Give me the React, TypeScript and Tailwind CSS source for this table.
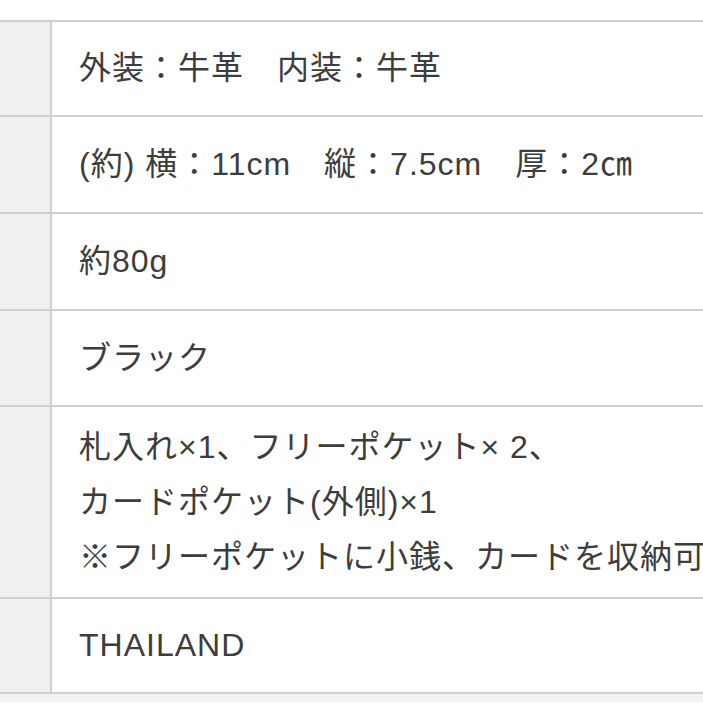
import React from "react"

const rows: { h: string; lines: string[] }[] = [
  { h: "h-[95px]", lines: ["外装：牛革　内装：牛革"] },
  { h: "h-[97px]", lines: ["(約) 横：11cm　縦：7.5cm　厚：2㎝"] },
  { h: "h-[97px]", lines: ["約80g"] },
  { h: "h-[96px]", lines: ["ブラック"] },
  {
    h: "h-[192px]",
    lines: ["札入れ×1、フリーポケット× 2、", "カードポケット(外側)×1", "※フリーポケットに小銭、カードを収納可能"],
  },
  { h: "h-[95px]", lines: ["THAILAND"] },
]

export default function App() {
  return (
    <div
      className="w-[703px] h-[703px] overflow-hidden bg-white text-[#3d3d3d]"
      style={{ fontFamily: '"Liberation Sans", "Noto Sans CJK JP", sans-serif' }}
    >
      <div className="h-[20px]" />
      {/* spec table */}
      <div className="w-[780px] border-t-2 border-[#cfcfcf]">
        {rows.map((row, i) => (
          <div key={i} className={`flex ${row.h} border-b-2 border-[#cfcfcf]`}>
            <div className="w-[52px] shrink-0 bg-[#f0f0f0] border-r-2 border-[#cfcfcf]" />
            <div className="flex flex-col justify-center pl-[27px] text-[32px] leading-[55px] tracking-[1px] whitespace-nowrap">
              {row.lines.map((l, j) => (
                <div key={j}>{l}</div>
              ))}
            </div>
          </div>
        ))}
      </div>
      <div className="h-[8px] bg-[#f3f3f3]" />
    </div>
  )
}
